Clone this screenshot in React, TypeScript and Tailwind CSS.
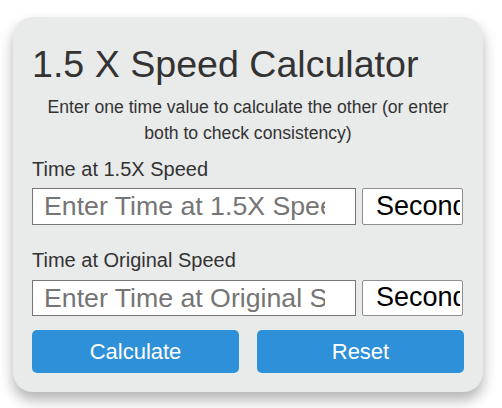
import React from "react";

export default function App() {
  return (
    <div
      className="w-[502px] h-[408px] bg-white overflow-hidden pt-[17px] pl-[13px]"
      style={{ fontFamily: '"Liberation Sans", Arial, sans-serif' }}
    >
      <div className="w-[470px] h-[375px] rounded-[20px] bg-[#e9eaea] shadow-[0_8px_14px_rgba(0,0,0,0.3)] px-[19px] pt-[26px] text-[#333333]">
        <h1 className="text-[37.6px] leading-[42px] font-normal m-0">1.5 X Speed Calculator</h1>
        <p className="mt-[10px] text-center text-[17.6px] leading-[25.5px]">
          Enter one time value to calculate the other (or enter both to check consistency)
        </p>
        <div className="mt-[12px] text-[20px] leading-[23px]">Time at 1.5X Speed</div>
        <div className="mt-[7px] flex gap-[6px]">
          <input
            placeholder="Enter Time at 1.5X Speed"
            className="w-[324px] h-[37px] border border-[#767676] bg-white pl-[11px] pr-[30px] text-[26.7px] leading-[32px] placeholder:text-[#757575] outline-none"
          />
          <div className="w-[101px] h-[37px] border border-[#8f8f8f] rounded-[2px] bg-white pl-[13px] pr-[2px] text-[27px] leading-[34px] text-black overflow-hidden whitespace-nowrap">
            <div className="overflow-hidden">Seconds</div>
          </div>
        </div>
        <div className="mt-[24px] text-[20px] leading-[23px]">Time at Original Speed</div>
        <div className="mt-[8px] flex gap-[6px]">
          <input
            placeholder="Enter Time at Original Speed"
            className="w-[324px] h-[36px] border border-[#767676] bg-white pl-[11px] pr-[30px] text-[26.7px] leading-[32px] placeholder:text-[#757575] outline-none"
          />
          <div className="w-[101px] h-[36px] border border-[#8f8f8f] rounded-[2px] bg-white pl-[13px] pr-[2px] text-[27px] leading-[33px] text-black overflow-hidden whitespace-nowrap">
            <div className="overflow-hidden">Seconds</div>
          </div>
        </div>
        <div className="mt-[14px] flex gap-[18px]">
          <button className="w-[207px] h-[43px] rounded-[5px] bg-[#2e90d8] text-white text-[22px]">Calculate</button>
          <button className="w-[207px] h-[43px] rounded-[5px] bg-[#2e90d8] text-white text-[22px]">Reset</button>
        </div>
      </div>
    </div>
  );
}
